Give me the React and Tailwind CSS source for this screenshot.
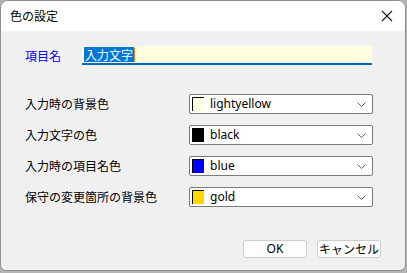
const font = { fontFamily: '"Noto Sans CJK JP", "Noto Sans", sans-serif' };

const rows = [
  { label: '入力時の背景色', name: 'lightyellow', color: 'bg-[#ffffe0]' },
  { label: '入力文字の色', name: 'black', color: 'bg-[#000000]' },
  { label: '入力時の項目名色', name: 'blue', color: 'bg-[#0000ff]' },
  { label: '保守の変更箇所の背景色', name: 'gold', color: 'bg-[#ffd700]' },
];

export default function App() {
  return (
    <div className="w-[407px] h-[273px] bg-[#b4b4b4] overflow-hidden" style={font}>
      <div className="w-[406px] h-[271px] bg-[#f0f0f0] rounded-t-[8px] rounded-b-[6px] border border-[#8f8f8f] overflow-hidden flex flex-col">
        {/* Title bar */}
        <div className="h-[30px] bg-white flex items-center justify-between pl-[9px] pr-[9px] shrink-0">
          <span className="text-[12px] text-black leading-none">色の設定</span>
          <svg width="12" height="12" viewBox="0 0 12 12" className="mr-[3px]">
            <path d="M1 1 L11 11 M11 1 L1 11" stroke="#1a1a1a" strokeWidth="1.1" />
          </svg>
        </div>

        {/* Body */}
        <div className="flex flex-col pl-[24px] pr-[24px] pt-[15px]">
          <div className="flex items-center h-[19px]">
            <span className="w-[57px] text-[12px] text-[#0000ff] leading-none">項目名</span>
            <div className="w-[290px] h-[19px] bg-[#ffffe0] border-b-2 border-[#0067c0] flex items-center pl-[2px]">
              <span className="bg-[#0078d7] text-white text-[12px] leading-[15px] h-[15px] px-[1px]">入力文字</span>
              <span className="w-px h-[14px] bg-[#e08020]"></span>
            </div>
          </div>

          <div className="flex flex-col gap-[11px] mt-[29px]">
            {rows.map((r) => (
              <div key={r.name} className="flex items-center h-[20px]">
                <span className="w-[164px] text-[12px] text-black leading-none">{r.label}</span>
                <div className="w-[184px] h-[20px] bg-white border border-[#7a7a7a] rounded-[2px] flex items-center pl-[2px] pr-[6px]">
                  <span className={`w-[12px] h-[14px] ${r.color} border-l border-t border-[#000000] shrink-0`}></span>
                  <span className="ml-[6px] text-[12px] text-black leading-none flex-1" style={{ fontFamily: '"Noto Sans", "Liberation Sans", sans-serif' }}>
                    {r.name}
                  </span>
                  <svg width="9" height="5" viewBox="0 0 9 5">
                    <path d="M0.5 0.5 L4.5 4.5 L8.5 0.5" stroke="#606060" strokeWidth="1" fill="none" />
                  </svg>
                </div>
              </div>
            ))}
          </div>

          <div className="flex justify-end gap-[10px] mt-[33px] pr-[0px]">
            <button className="w-[64px] h-[18px] bg-[#fdfdfd] border border-[#cccccc] rounded-[3px] text-[12px] leading-none text-black" style={{ fontFamily: '"Noto Sans", "Liberation Sans", sans-serif' }}>
              OK
            </button>
            <button className="w-[64px] h-[18px] bg-[#fdfdfd] border border-[#cccccc] rounded-[3px] text-[12px] leading-none text-black">
              キャンセル
            </button>
          </div>
        </div>
      </div>
    </div>
  );
}
